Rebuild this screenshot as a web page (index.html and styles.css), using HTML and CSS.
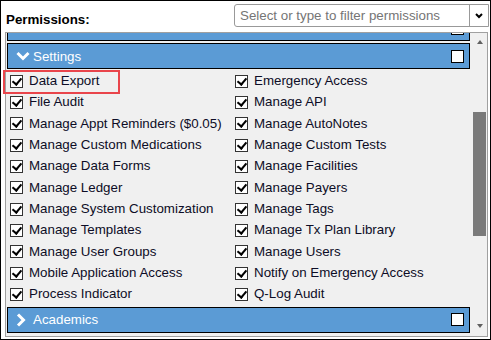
FILE: index.html
```html
<!DOCTYPE html>
<html lang="en">
<head>
  <meta charset="UTF-8" />
  <title>Permissions</title>
  <link rel="stylesheet" href="styles.css">
</head>
<body>
  <div class="frame">
    <div class="top-row">
      <div class="perm-label">Permissions:</div>
      <div class="filter">
        <span class="filter-text">Select or type to filter permissions</span>
        <span class="filter-btn">
          <svg width="8" height="6" viewBox="0 0 8 6"><polyline points="1,1 4,4 7,1" fill="none" stroke="#000" stroke-width="2"/></svg>
        </span>
      </div>
    </div>

    <div class="perm-box">
      <div class="perm-list">
        <!-- group above, scrolled mostly out of view -->
        <div class="group cut">
          <div class="group-head">
            <svg class="chev" width="14" height="14" viewBox="0 0 14 14"><polyline points="1.5,4 7,9.5 12.5,4" fill="none" stroke="#fff" stroke-width="3"/></svg>
            <span class="head-box"></span>
          </div>
        </div>

        <div class="group">
          <div class="group-head">
            <svg class="chev" width="14" height="14" viewBox="0 0 14 14"><polyline points="1.5,4 7,9.5 12.5,4" fill="none" stroke="#fff" stroke-width="3"/></svg>
            <span>Settings</span>
            <span class="head-box"></span>
          </div>
          <div class="items" id="settingsItems"></div>
        </div>

        <div class="group">
          <div class="group-head">
            <svg class="chev" width="14" height="14" viewBox="0 0 14 14"><polyline points="2,1.5 7.5,7 2,12.5" fill="none" stroke="#fff" stroke-width="3"/></svg>
            <span>Academics</span>
            <span class="head-box"></span>
          </div>
        </div>
      </div>

      <div class="scrollbar">
        <div class="sb-btn"><span class="arrow-up"></span></div>
        <div class="sb-track"><div class="sb-thumb"></div></div>
        <div class="sb-btn sb-down"><span class="arrow-down"></span></div>
      </div>
    </div>

    <div class="highlight"></div>
  </div>

  <script>
    const perms = [
      'Data Export', 'Emergency Access',
      'File Audit', 'Manage API',
      'Manage Appt Reminders ($0.05)', 'Manage AutoNotes',
      'Manage Custom Medications', 'Manage Custom Tests',
      'Manage Data Forms', 'Manage Facilities',
      'Manage Ledger', 'Manage Payers',
      'Manage System Customization', 'Manage Tags',
      'Manage Templates', 'Manage Tx Plan Library',
      'Manage User Groups', 'Manage Users',
      'Mobile Application Access', 'Notify on Emergency Access',
      'Process Indicator', 'Q-Log Audit'
    ];
    const list = document.getElementById('settingsItems');
    perms.forEach(name => {
      const row = document.createElement('label');
      row.className = 'item';
      row.innerHTML = `<span class="check"></span><span>${name}</span>`;
      list.appendChild(row);
    });
  </script>
</body>
</html>
```

FILE: styles.css
```css
* { box-sizing: border-box; }
body {
  margin: 0;
  font-family: 'Liberation Sans', Arial, sans-serif;
  font-size: 13.33px;
  background: #fff;
}
.frame {
  position: relative;
  width: 491px; height: 340px;
  border: 1px solid #000;
  padding: 3px 2px 2px 4px;
  display: flex; flex-direction: column;
}
.top-row {
  display: flex; justify-content: space-between; align-items: flex-end;
  margin-bottom: 5px;
}
.perm-label { font-weight: bold; color: #000; padding-left: 1px; }
.filter {
  width: 255px; height: 23px; margin-right: -1px;
  border: 1px solid #999; border-radius: 3px 0 0 3px;
  display: flex; align-items: center;
}
.filter-text { flex: 1; padding-left: 5px; color: #757575; white-space: nowrap; }
.filter-btn {
  width: 19px; height: 100%;
  border-left: 1px solid #999;
  display: flex; align-items: center; justify-content: center;
}
.perm-box {
  flex: 1;
  border: 1px solid #a0a0a0;
  background: #f0f0f0;
  display: flex; overflow: hidden;
}
.perm-list { flex: 1; overflow: hidden; padding: 0 2px 0 1px; }
.group + .group { margin-top: 2px; }
.group.cut { margin-top: -18px; }
.group-head {
  height: 26px;
  border: 1px solid #000;
  background: #5b9bd5; color: #fff;
  display: flex; align-items: center; gap: 3px;
  padding: 0 5px 0 8px;
}
.head-box {
  margin-left: auto;
  width: 13px; height: 13px;
  background: #fff; border: 1px solid #000;
}
.items {
  display: grid; grid-template-columns: 225px 1fr;
  grid-auto-rows: 21.33px;
  padding: 1px 0 0 3px;
  color: #0d0d26;
}
.item { display: flex; align-items: center; gap: 6px; white-space: nowrap; }
.check {
  position: relative;
  width: 13px; height: 13px; flex: none;
  background: #fff; border: 1px solid #333;
  margin-top: 1px;
}
.check::after {
  content: ""; position: absolute;
  left: 3px; top: 0px; width: 4px; height: 7px;
  border-right: 2px solid #000; border-bottom: 2px solid #000;
  transform: rotate(40deg);
}
.scrollbar {
  width: 15px; display: flex; flex-direction: column;
  background: #f0f0f0;
}
.sb-btn {
  height: 17px;
  display: flex; align-items: center; justify-content: center;
}
.sb-down { padding-bottom: 4px; }
.sb-track { flex: 1; }
.sb-thumb {
  margin: 62px 1px 0 1px; height: 124px;
  background: #7a7a7a;
}
.arrow-up {
  border-left: 3.5px solid transparent; border-right: 3.5px solid transparent;
  border-bottom: 4px solid #606060;
}
.arrow-down {
  border-left: 3.5px solid transparent; border-right: 3.5px solid transparent;
  border-top: 4px solid #606060;
}
.highlight {
  position: absolute; left: 2px; top: 69px;
  width: 117px; height: 24px;
  border: 2px solid #e9454b;
}
```
